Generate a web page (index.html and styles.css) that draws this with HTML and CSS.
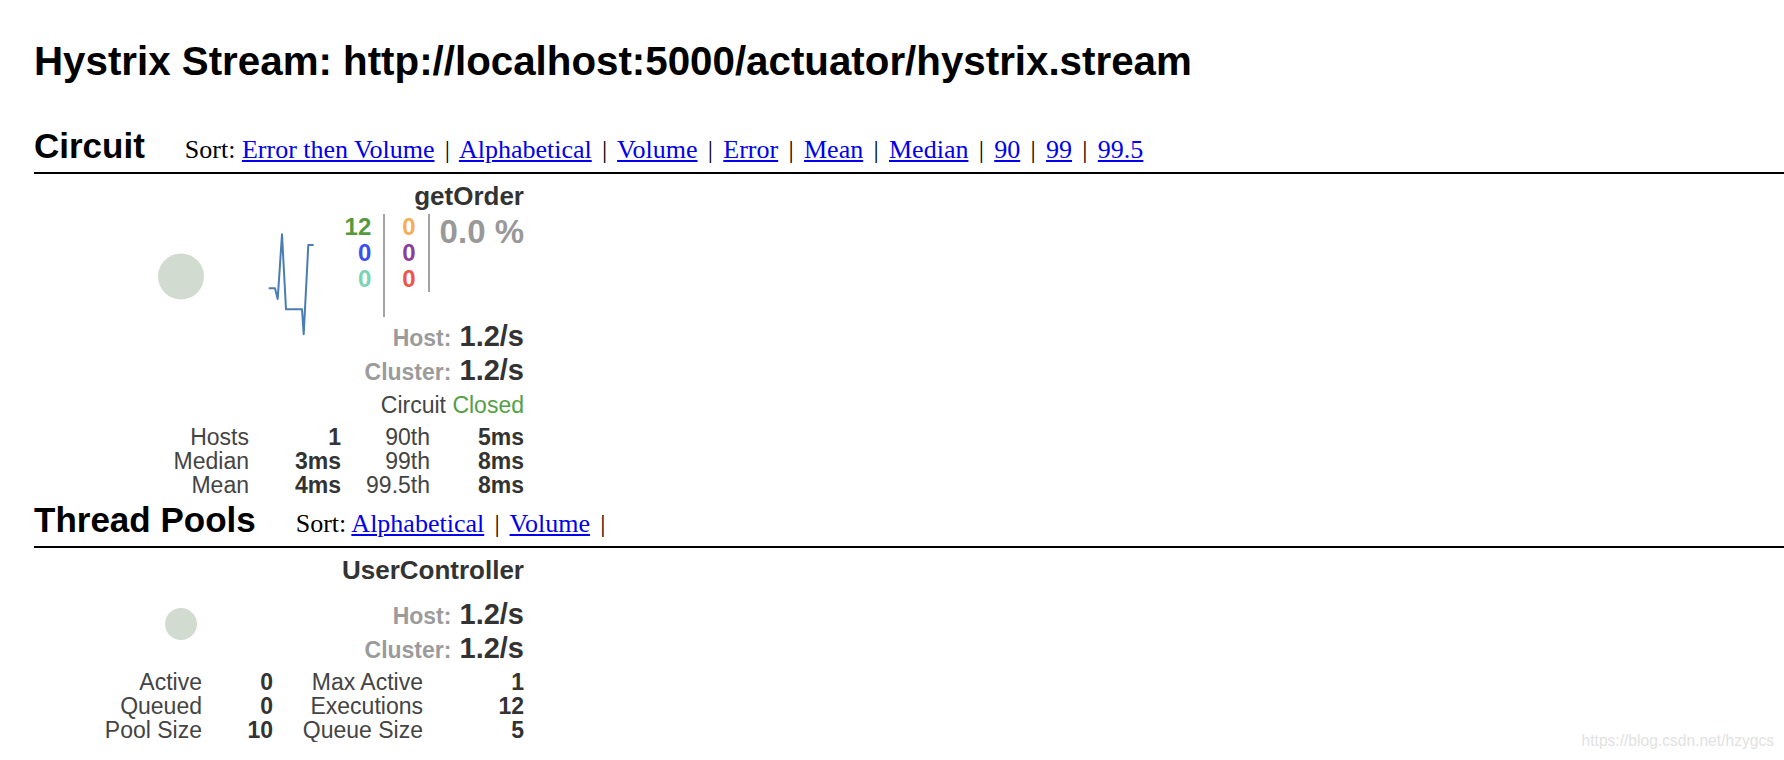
FILE: index.html
```html
<!DOCTYPE html>
<html lang="en">
<head>
    <meta charset="UTF-8">
    <title>Hystrix Monitor</title>
    <meta name="viewport" content="width=device-width, initial-scale=1.0">
    <link rel="stylesheet" href="styles.css">
</head>
<body>
<h2 class="stream-title">Hystrix Stream: http://localhost:5000/actuator/hystrix.stream</h2>

<div class="section circuits">
    <div class="section-head">
        <h3>Circuit</h3>
        <div class="sort">Sort: <a href="#">Error then Volume</a> <span class="sep">|</span> <a href="#">Alphabetical</a> <span class="sep">|</span> <a href="#">Volume</a> <span class="sep">|</span> <a href="#">Error</a> <span class="sep">|</span> <a href="#">Mean</a> <span class="sep">|</span> <a href="#">Median</a> <span class="sep">|</span> <a href="#">90</a> <span class="sep">|</span> <a href="#">99</a> <span class="sep">|</span> <a href="#">99.5</a></div>
    </div>

    <div class="monitor">
        <div class="monitor-top">
            <svg class="chart" width="300" height="246" viewBox="0 0 300 246">
                <circle cx="147" cy="102.5" r="23" fill="#d1dbd0"/>
                <polyline points="234.7,114.3 241,114.3 243.7,125 248,60.3 252,135.3 268,135.3 269.7,160.3 274.3,71 279.7,71"
                          fill="none" stroke="#4a7db4" stroke-width="2" stroke-linejoin="round"/>
            </svg>
            <div class="monitor-data">
                <div class="name">getOrder</div>
                <div class="counters">
                    <div class="cell first">
                        <span class="success">12</span>
                        <span class="short">0</span>
                        <span class="bad">0</span>
                    </div>
                    <div class="cell second">
                        <span class="timeout">0</span>
                        <span class="rejected">0</span>
                        <span class="failure">0</span>
                    </div>
                    <div class="error-rate">0.0 %</div>
                </div>
                <div class="rates">
                    <div class="rate"><span class="label">Host:</span> <span class="value">1.2/s</span></div>
                    <div class="rate"><span class="label">Cluster:</span> <span class="value">1.2/s</span></div>
                </div>
                <div class="status">Circuit <span class="closed">Closed</span></div>
            </div>
        </div>
        <div class="stats circuit-stats">
            <span>Hosts</span><b>1</b><span>90th</span><b>5ms</b>
            <span>Median</span><b>3ms</b><span>99th</span><b>8ms</b>
            <span>Mean</span><b>4ms</b><span>99.5th</span><b>8ms</b>
        </div>
    </div>
</div>

<div class="section pools">
    <div class="section-head">
        <h3>Thread Pools</h3>
        <div class="sort">Sort: <a href="#">Alphabetical</a> <span class="sep">|</span> <a href="#">Volume</a> <span class="sep">|</span></div>
    </div>

    <div class="monitor">
        <div class="monitor-top">
            <svg class="chart" width="300" height="117" viewBox="0 0 300 117">
                <circle cx="147" cy="76" r="16" fill="#d1dbd0"/>
            </svg>
            <div class="monitor-data">
                <div class="name">UserController</div>
                <div class="rates pool-rates">
                    <div class="rate"><span class="label">Host:</span> <span class="value">1.2/s</span></div>
                    <div class="rate"><span class="label">Cluster:</span> <span class="value">1.2/s</span></div>
                </div>
            </div>
        </div>
        <div class="stats pool-stats">
            <span>Active</span><b>0</b><span>Max Active</span><b>1</b>
            <span>Queued</span><b>0</b><span>Executions</span><b>12</b>
            <span>Pool Size</span><b>10</b><span>Queue Size</span><b>5</b>
        </div>
    </div>
</div>

<div class="watermark">https://blog.csdn.net/hzygcs</div>
</body>
</html>
```

FILE: styles.css
```css
body {
    margin: 0;
    padding: 0 0 0 34px;
    font-family: "Liberation Sans", Arial, sans-serif;
    background-color: #fff;
    color: #000;
}
.stream-title {
    font-size: 40.3px;
    line-height: 46px;
    font-weight: bold;
    margin: 39px 0 0;
}
.circuits {
    margin-top: 41px;
}
.pools {
    margin-top: 3px;
}
.section-head {
    display: flex;
    align-items: baseline;
    gap: 40px;
    padding-bottom: 6px;
    border-bottom: 2px solid #000;
}
.section-head h3 {
    font-size: 35px;
    line-height: 40px;
    margin: 0;
}
.sort {
    font-family: "Liberation Serif", "Times New Roman", serif;
    font-size: 26px;
}
.sort a {
    color: #0000ee;
}
.sort .sep {
    margin: 0 3.8px;
}

/* one monitor box */
.monitor {
    width: 490px;
    color: #333;
}
.monitor-top {
    display: flex;
    align-items: flex-start;
}
.chart {
    flex: none;
    display: block;
}
.monitor-data {
    flex: 1;
    text-align: right;
    padding-top: 7px;
}
.name {
    font-size: 26px;
    line-height: 30px;
    font-weight: bold;
}
.counters {
    display: flex;
    justify-content: flex-end;
    align-items: flex-start;
    margin-top: 3px;
    font-weight: bold;
}
.counters .cell {
    display: flex;
    flex-direction: column;
    font-size: 24px;
    line-height: 26px;
    text-align: right;
    border-right: 2px solid #a3a3a3;
}
.counters .first {
    padding: 0 12px 25px 0;
}
.counters .second {
    padding: 0 12px 0 17px;
}
.error-rate {
    font-size: 33px;
    line-height: 36px;
    color: #999;
    margin-left: 10px;
}
.success { color: #55993f; }
.short { color: #3a4ff2; }
.bad { color: #79d5b3; }
.timeout { color: #f5ad58; }
.rejected { color: #8c3ea0; }
.failure { color: #ee5548; }

.rates {
    margin-top: 2px;
}
.pool-rates {
    margin-top: 12px;
}
.rate {
    font-size: 29px;
    line-height: 34px;
    font-weight: bold;
}
.rate .label {
    font-size: 23px;
    line-height: 1;
    color: #9b9b9b;
}
.status {
    font-size: 23px;
    line-height: 30px;
    margin-top: 3px;
    color: #444;
}
.closed {
    color: #53a046;
}
.stats {
    display: grid;
    font-size: 23px;
    line-height: 24px;
    margin-top: 5px;
    text-align: right;
    color: #444;
}
.stats b {
    color: #333;
}
.circuit-stats {
    grid-template-columns: 215px 92px 89px 94px;
}
.pool-stats {
    grid-template-columns: 168px 71px 150px 101px;
}

.watermark {
    position: absolute;
    top: 732px;
    right: 10px;
    font-size: 15.6px;
    line-height: 18px;
    color: #e2e2e2;
}
```
